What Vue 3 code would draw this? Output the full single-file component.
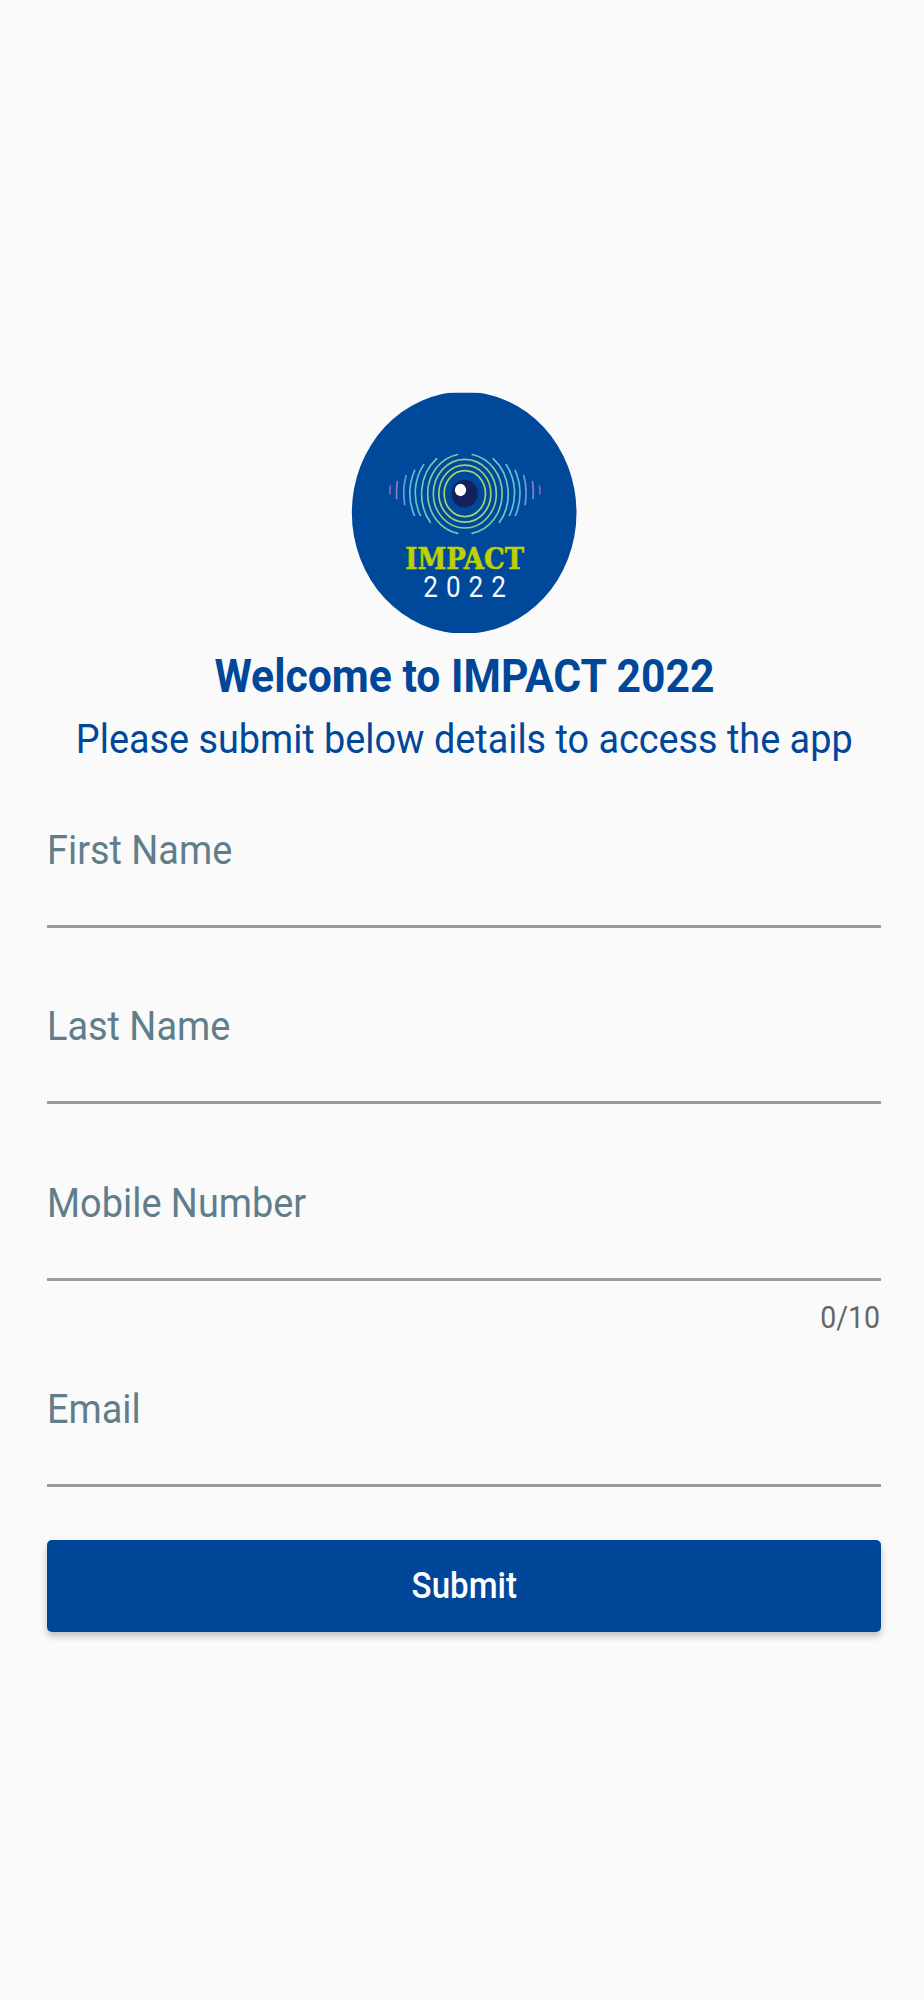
<script setup>
const fields = [
  { id: 'first', label: 'First Name', type: 'text' },
  { id: 'last', label: 'Last Name', type: 'text' },
  { id: 'mobile', label: 'Mobile Number', type: 'tel', counter: '0/10' },
  { id: 'email', label: 'Email', type: 'email' },
]

const rings = [
  { rx: 62, ry: 69, color: '#a5d36e' },
  { rx: 78, ry: 85.5, color: '#9bd07c' },
  { rx: 94.5, ry: 103, color: '#8bcd90' },
]

// Left-hand waves; the same set is mirrored for the right-hand side.
const waves = [
  { d: 'M353 223.5A111 120.400 0 0 0 353 460', color: '#7ccba6' },
  { d: 'M290 236A129 140 0 0 0 271 427', color: '#6fcabb' },
  { d: 'M251 254A148 152 0 0 0 241 406', color: '#60c4d2' },
  { d: 'M224 271A164 170 0 0 0 223 406', color: '#5fb9dc' },
  { d: 'M198 287A190 200 0 0 0 194 374', color: '#6f9dd0' },
  { d: 'M172 305Q168 331 170 356', color: '#8a80c0' },
  { d: 'M151 318Q149 330 150 342', color: '#8c62ad' },
]
</script>

<template>
  <main class="screen">
    <svg class="logo" viewBox="0 0 750 795" role="img" aria-label="Impact 2022">
      <defs>
        <clipPath id="badge"><rect x="0" y="38" width="750" height="721" /></clipPath>
      </defs>
      <ellipse cx="372.5" cy="398" rx="337" ry="363" fill="#004899" clip-path="url(#badge)" />
      <g fill="none" stroke-width="5" stroke-linecap="round">
        <ellipse v-for="r in rings" :key="r.rx" cx="374.5" cy="341" :rx="r.rx" :ry="r.ry" :stroke="r.color" />
        <path v-for="w in waves" :key="w.d" :d="w.d" :stroke="w.color" />
        <g transform="translate(749.5 0) scale(-1 1)">
          <path v-for="w in waves" :key="w.d" :d="w.d" :stroke="w.color" />
        </g>
      </g>
      <ellipse cx="374" cy="341" rx="39" ry="42" fill="#14215d" />
      <ellipse cx="361.500" cy="330" rx="17" ry="18.500" fill="#fff" />
      <text class="brand" x="196" y="567" textLength="356" lengthAdjust="spacingAndGlyphs">IMPACT</text>
      <text class="year" transform="translate(250 651) scale(.86 1)" x="0 79 158 237">2022</text>
    </svg>

    <h1 class="title"><span>Welcome to IMPACT 2022</span></h1>
    <p class="subtitle"><span>Please submit below details to access the app</span></p>

    <form class="form" @submit.prevent>
      <div v-for="f in fields" :key="f.id" class="group" :class="{ counted: f.counter }">
        <div class="field">
          <label :for="f.id">{{ f.label }}</label>
          <input :id="f.id" :type="f.type" />
        </div>
        <div v-if="f.counter" class="counter"><span>{{ f.counter }}</span></div>
      </div>
      <button class="submit"><span>Submit</span></button>
    </form>
  </main>
</template>

<style>
body { background: #fafafa; }
</style>

<style scoped>
.screen {
  box-sizing: border-box;
  width: 924px;
  height: 2000px;
  padding: 380px 42.7px 0 47.3px;
  background: #fafafa;
  font-family: Roboto, "Liberation Sans", sans-serif;
  overflow: hidden;
}
.logo {
  display: block;
  width: 250px;
  height: 265px;
  margin-left: 292.7px;
}
.brand {
  font: bold 87px "DejaVu Serif", serif;
  fill: #bdd000;
  stroke: #bdd000;
  stroke-width: 2px;
}
.year {
  font: 400 91px Roboto, sans-serif;
  fill: #f4f8ff;
}
.title, .subtitle {
  display: flex;
  justify-content: center;
  white-space: nowrap;
  color: #004799;
}
.title {
  margin: 4px 0 0;
  font-size: 46px;
  font-weight: 700;
  line-height: 54px;
}
.subtitle {
  margin: 12px 0 0;
  font-size: 41px;
  font-weight: 400;
  line-height: 48px;
}
.title span, .subtitle span, .submit span {
  display: inline-block;
  transform: scaleX(.928);
}
.subtitle span { transform: scaleX(.922); }
.form {
  display: flex;
  flex-direction: column;
  margin-top: 63px;
}
.group { height: 176.300px; }
.counted { height: 206.400px; }
.field {
  box-sizing: border-box;
  display: flex;
  flex-direction: column;
  height: 102px;
  border-bottom: 3px solid #9b9b9b;
}
label {
  align-self: flex-start;
  color: #607d8b;
  font-size: 41px;
  line-height: 48px;
  white-space: nowrap;
  transform: scaleX(.924);
  transform-origin: left;
}
input {
  flex: 1;
  min-height: 0;
  padding: 0;
  border: 0;
  outline: 0;
  background: transparent;
  font: 36px Roboto, sans-serif;
}
.counter {
  display: flex;
  justify-content: flex-end;
  margin-top: 19px;
  padding-right: 1.500px;
  color: #666;
  font-size: 31px;
  line-height: 36px;
}
.counter span {
  transform: scaleX(.92);
  transform-origin: right;
}
.submit {
  height: 92px;
  margin-top: -21.300px;
  padding: 0;
  border: 0;
  border-radius: 5px;
  background: #004799;
  box-shadow: 0 5px 6px rgba(0, 0, 0, .17), 0 2px 8px rgba(0, 0, 0, .08);
  color: #fff;
  font: 500 36px/42px Roboto, sans-serif;
}
.submit span { transform: scaleX(.92); }
</style>
